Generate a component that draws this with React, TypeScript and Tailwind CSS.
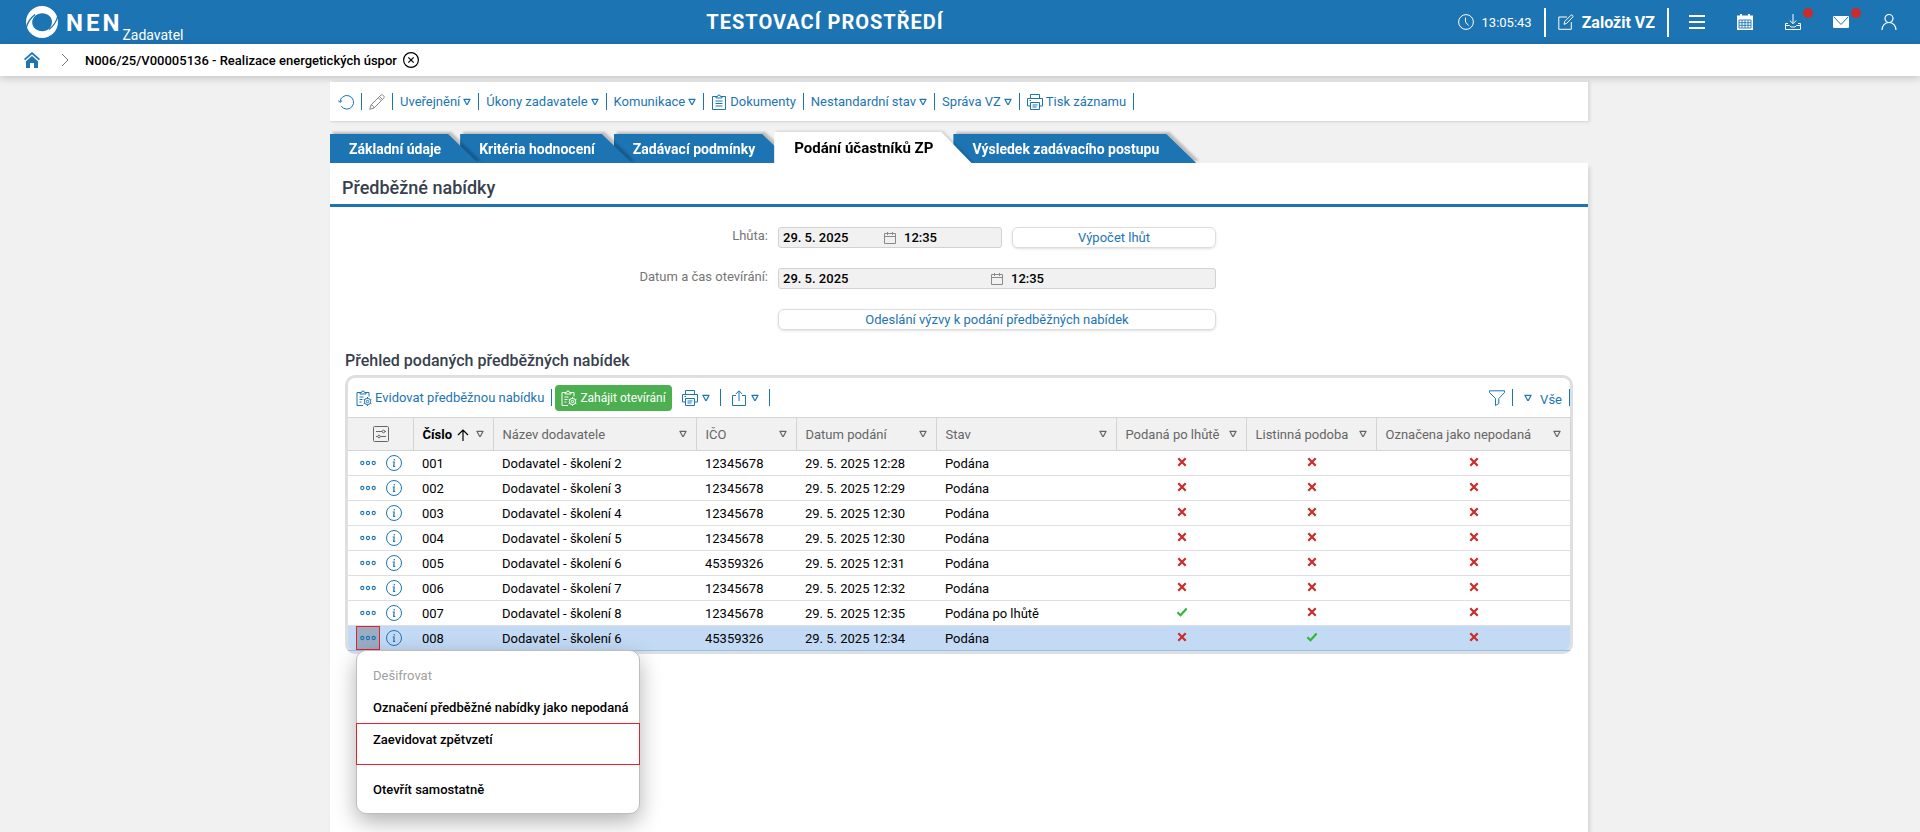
import React, { useState } from "react";
import clsx from "clsx";

type IconProps = { className?: string };

const Logo = () => (
  <svg viewBox="0 0 32 32" className="h-8 w-8" fill="none">
    <path
      d="M16 0a16 16 0 1 0 0 32a16 16 0 1 0 0-32ZM16.300 7.200c5.500 0 9.700 3.800 9.700 8.800s-4.200 9.300-9.700 9.300S6.200 21.500 6.200 16.300s4.600-9.100 10.100-9.100Z"
      fill="#fff"
      fillRule="evenodd"
    />
    <path d="M0 23C1 17.500 4 12.500 9 8.500M32 9C31 14.500 28 19.500 23 23.500" stroke="#1d74b3" strokeWidth="1.300" />
  </svg>
);

const Triangle = ({ className }: IconProps) => (
  <svg viewBox="0 0 8 8" className={clsx("h-2 w-2 shrink-0", className)} fill="none" stroke="currentColor" strokeWidth="1.200">
    <path d="M0.900 1.300h6.200L4.300 6.500H3.700Z" strokeLinejoin="round" />
  </svg>
);

const Line = ({ className, children }: IconProps & { children: React.ReactNode }) => (
  <svg
    viewBox="0 0 16 16"
    className={clsx("h-4 w-4 shrink-0", className)}
    fill="none"
    stroke="currentColor"
    strokeWidth="1"
  >
    {children}
  </svg>
);

const HomeIcon = () => (
  <svg viewBox="0 0 16 16" className="h-4 w-4" fill="#1d74b3">
    <path d="M0.600 7.600 8 1.100l7.400 6.500" fill="none" stroke="#1d74b3" strokeWidth="1.800" />
    <path d="M8 4 2 9.300V16h4v-5h4v5h4V9.300Z" />
  </svg>
);

const RefreshIcon = () => (
  <Line>
    <path d="M2 8a6.800 6.800 0 1 1 1.300 4.300M0 6.300 2 8.500 4.200 6.500" />
  </Line>
);

const PencilIcon = () => (
  <Line className="text-[#888]">
    <path d="M0.700 15.300 2 11 11.800 1.200c1.500-1.500 4.500 1.500 3 3L5 14ZM10.500 2.500l3 3M9.300 3.700l3 3M2 11c1.500 0 3 1.500 3 3" />
  </Line>
);

const ClipboardIcon = () => (
  <Line>
    <path d="M5 2.500H1.500v13h13v-13H11M5 4V2.500h1.500a1.500 1.500 0 0 1 3 0H11V4ZM4.500 7h7M4.500 9.500h7M4.500 12h7" />
  </Line>
);

const ClipboardGearIcon = () => (
  <Line>
    <path d="M4 2.500H1v13h6M4 4V2.500h1.500a1.500 1.500 0 0 1 3 0H10V4ZM10 2.500h3v4M3.500 7h4M3.500 9.500h3M3.500 12h2" />
    <circle cx="11.500" cy="11.500" r="3.200" />
    <circle cx="11.500" cy="11.500" r="1.200" />
    <path d="M11.500 7v1.500M11.500 14.500V16M7.600 9.300l1.300.7M14.100 13l1.300.7M7.600 13.700l1.300-.7M14.100 10l1.300-.7" />
  </Line>
);

const PrinterIcon = () => (
  <Line>
    <path d="M3.500 4.500v-4h9v4M3.500 12h-3V4.500h15V12h-3M3.500 8.500h9v7h-9ZM5.500 11h5M5.500 13h4M2.500 6.500h1.500" />
  </Line>
);

const ShareIcon = () => (
  <Line>
    <path d="M5 5.500H1.500v10h13v-10H11M8 11V1M4.800 4 8 0.800 11.200 4" />
  </Line>
);

const FunnelIcon = () => (
  <Line>
    <path d="M0.500 0.800h15v1.700L9.800 8.500v5l-3.300 2v-7L0.500 2.500Z" />
  </Line>
);

const CalendarIcon = () => (
  <svg viewBox="0 0 12 12" className="h-3 w-3" fill="none" stroke="#8a8a8a" strokeWidth="1">
    <path d="M0.500 1.500h11v10h-11ZM0.500 4.500h11M3.500 0v3M8.500 0v3" />
  </svg>
);

const SettingsIcon = () => (
  <Line className="text-[#666]">
    <rect x="0.500" y="0.500" width="15" height="15" rx="1" />
    <path d="M3 5.500h6M11.800 5.500H13M3 10.500h1.500M7.500 10.500H13" />
    <circle cx="10.500" cy="5.500" r="1.300" />
    <circle cx="6" cy="10.500" r="1.300" />
  </Line>
);

const DotsIcon = () => (
  <svg viewBox="0 0 16 6" className="h-1.5 w-4" fill="none" stroke="#1d74b3" strokeWidth="1.100">
    <circle cx="2.300" cy="3" r="1.600" />
    <circle cx="8" cy="3" r="1.600" />
    <circle cx="13.700" cy="3" r="1.600" />
  </svg>
);

const InfoIcon = () => (
  <Line>
    <circle cx="8" cy="8" r="7.500" />
    <path d="M6.700 7h1.500l-.5 4.300h1.500" strokeWidth="1.200" />
    <circle cx="8.300" cy="4.800" r=".8" fill="currentColor" stroke="none" />
  </Line>
);

const CrossMark = () => (
  <svg viewBox="0 0 10 10" className="mx-auto h-2.5 w-2.5" fill="none" stroke="#ca2b2b" strokeWidth="2.200">
    <path d="M1.300 1.300 8.700 8.700M8.700 1.300 1.300 8.700" />
  </svg>
);

const CheckMark = () => (
  <svg viewBox="0 0 10 10" className="mx-auto h-2.5 w-2.5" fill="none" stroke="#35b535" strokeWidth="2.200">
    <path d="M0.300 5.300 3.500 8.300 9.700 1.500" />
  </svg>
);

const Sep = () => <span className="h-[17px] w-px shrink-0 bg-[#1d74b3]" />;

const actions = [
  { label: "Uveřejnění", menu: true },
  { label: "Úkony zadavatele", menu: true },
  { label: "Komunikace", menu: true },
  { label: "Dokumenty", icon: <ClipboardIcon /> },
  { label: "Nestandardní stav", menu: true },
  { label: "Správa VZ", menu: true },
  { label: "Tisk záznamu", icon: <PrinterIcon /> },
];

const tabs = [
  { label: "Základní údaje", z: "z-30" },
  { label: "Kritéria hodnocení", z: "z-20" },
  { label: "Zadávací podmínky", z: "z-10" },
  { label: "Podání účastníků ZP", z: "z-40", active: true },
  { label: "Výsledek zadávacího postupu", z: "z-0" },
];

const columns = [
  { label: "Číslo", width: "w-[80px]", sorted: true },
  { label: "Název dodavatele", width: "w-[203px]" },
  { label: "IČO", width: "w-[100px]" },
  { label: "Datum podání", width: "w-[140px]" },
  { label: "Stav", width: "w-[180px]" },
  { label: "Podaná po lhůtě", width: "w-[130px]" },
  { label: "Listinná podoba", width: "w-[130px]" },
  { label: "Označena jako nepodaná", width: "w-[194px]" },
];

const rows = [
  { id: "001", name: "Dodavatel - školení 2", ico: "12345678", date: "29. 5. 2025 12:28", state: "Podána", late: false, paper: false },
  { id: "002", name: "Dodavatel - školení 3", ico: "12345678", date: "29. 5. 2025 12:29", state: "Podána", late: false, paper: false },
  { id: "003", name: "Dodavatel - školení 4", ico: "12345678", date: "29. 5. 2025 12:30", state: "Podána", late: false, paper: false },
  { id: "004", name: "Dodavatel - školení 5", ico: "12345678", date: "29. 5. 2025 12:30", state: "Podána", late: false, paper: false },
  { id: "005", name: "Dodavatel - školení 6", ico: "45359326", date: "29. 5. 2025 12:31", state: "Podána", late: false, paper: false },
  { id: "006", name: "Dodavatel - školení 7", ico: "12345678", date: "29. 5. 2025 12:32", state: "Podána", late: false, paper: false },
  { id: "007", name: "Dodavatel - školení 8", ico: "12345678", date: "29. 5. 2025 12:35", state: "Podána po lhůtě", late: true, paper: false },
  { id: "008", name: "Dodavatel - školení 6", ico: "45359326", date: "29. 5. 2025 12:34", state: "Podána", late: false, paper: true },
];

const DateTimeField = ({ id, className }: { id: string; className?: string }) => {
  const [date, setDate] = useState("29. 5. 2025");
  const [time, setTime] = useState("12:35");

  return (
    <div
      className={clsx(
        "grid h-[21px] grid-cols-[1fr_12px_1fr] items-center rounded-[3px] border border-[#d2d2d2] bg-[#f1f1f1] font-medium",
        className
      )}
    >
      <input id={id} value={date} onChange={(e) => setDate(e.target.value)} className="w-full min-w-0 pl-1 outline-none" />
      <button type="button" aria-labelledby={`${id}-label`}>
        <CalendarIcon />
      </button>
      <input
        aria-labelledby={`${id}-label`}
        value={time}
        onChange={(e) => setTime(e.target.value)}
        className="w-full min-w-0 pl-2 outline-none"
      />
    </div>
  );
};

const Header = () => (
  <header className="grid h-11 grid-cols-[1fr_auto_1fr] items-center bg-[#1d74b3] text-white">
    <div className="flex h-full items-center pl-[26px]">
      <Logo />
      <span className="ml-2 pt-0.5 text-2xl font-bold tracking-[3px]">NEN</span>
      <span className="self-end text-sm leading-[18px]">Zadavatel</span>
    </div>
    <h1 className="pr-[270px] text-xl font-bold tracking-wider">TESTOVACÍ PROSTŘEDÍ</h1>
    <div className="flex items-center justify-end pr-[23px]">
      <Line>
        <circle cx="8" cy="8" r="7.400" />
        <path d="M7.500 3.500V8l3 3.500" />
      </Line>
      <span className="ml-2 pt-px text-[13px]">13:05:43</span>
      <span className="mx-3 h-[29px] w-0.5 bg-white" />
      <button className="flex items-center gap-2 text-base font-bold whitespace-nowrap">
        <Line>
          <path d="M9 3H0.800v12.300h12.500V8M6 10.300l.7-2.800L13 1.200c1-1 2.800.8 1.800 1.800L8.600 9.400Z" />
        </Line>
        <span className="pt-px">Založit VZ</span>
      </button>
      <span className="ml-3 h-[29px] w-0.5 bg-white" />
      <div className="ml-5 flex gap-8">
        <button>
          <Line>
            <path d="M0 2h16M0 8h16M0 14h16" strokeWidth="2" />
          </Line>
        </button>
        <button>
          <svg viewBox="0 0 16 16" className="h-4 w-4">
            <path d="M0 1.500h16V16H0ZM3 0h2v3H3ZM11 0h2v3h-2Z" fill="#fff" />
            <path
              d="M2 6h12v8H2ZM5 6v8M8 6v8M11 6v8M2 8.700h12M2 11.300h12"
              fill="none"
              stroke="#1d74b3"
              strokeWidth=".9"
            />
          </svg>
        </button>
        <button className="relative">
          <Line>
            <path d="M8 0v9.500M4.800 6.500 8 9.700l3.200-3.200M3 9.500H0.500v6h15v-6H13M0.500 11.500h4l1.500 1.500h4l1.500-1.500h4" />
          </Line>
          <span className="absolute -top-1.5 left-[18px] h-2.5 w-2.5 rounded-full bg-[#ca2b2b]" />
        </button>
        <button className="relative">
          <svg viewBox="0 0 16 16" className="h-4 w-4">
            <rect y="2" width="16" height="12" rx="1.300" fill="#fff" />
            <path d="M1 3l7 7.500L15 3" fill="none" stroke="#1d74b3" />
          </svg>
          <span className="absolute -top-1.5 left-[18px] h-2.5 w-2.5 rounded-full bg-[#ca2b2b]" />
        </button>
        <button>
          <Line>
            <circle cx="8" cy="4.500" r="4" strokeWidth="1.200" />
            <path d="M1 16c0-4.500 3-7.500 7-7.500s7 3 7 7.500" strokeWidth="1.200" />
          </Line>
        </button>
      </div>
    </div>
  </header>
);

const ContextMenu = () => (
  <ul className="absolute top-full left-2 z-10 -mt-px w-[284px] rounded-[10px] border border-[#bdbdbd] bg-white pt-[9px] pb-[7px] font-medium whitespace-nowrap shadow-[0_8px_22px_rgba(0,0,0,0.3)]">
    <li>
      <button disabled className="h-8 w-full px-4 text-left font-normal text-[#a0a0a0]">
        Dešifrovat
      </button>
    </li>
    <li>
      <button className="h-8 w-full px-4 text-left">Označení předběžné nabídky jako nepodaná</button>
    </li>
    <li className="-mx-px -mt-px border border-[#e8202a]">
      <button className="block w-full px-4 pt-[6px] pb-[14px] text-left">Zaevidovat zpětvzetí</button>
    </li>
    <li className="pt-[9px]">
      <button className="h-8 w-full px-4 text-left">Otevřít samostatně</button>
    </li>
  </ul>
);

const OffersTable = () => (
  <table className="w-full table-fixed border-collapse">
    <thead>
      <tr className="h-[33px] border-y border-[#d4d4d4] bg-[#f1f1f1] text-left text-[#666]">
        <th className="w-[65px] border-r border-[#d4d4d4] pl-px">
          <button className="mx-auto block">
            <SettingsIcon />
          </button>
        </th>
        {columns.map((col) => (
          <th key={col.label} className={clsx("border-r border-[#d4d4d4] px-[9px] font-normal", col.width)}>
            <div className="flex items-center justify-between whitespace-nowrap">
              <span className={clsx("flex items-center gap-[5px] pt-px", col.sorted && "font-bold text-black")}>
                {col.label}
                {col.sorted && (
                  <svg viewBox="0 0 12 12" className="h-3 w-3" fill="none" stroke="currentColor" strokeWidth="1.200">
                    <path d="M6 12V1M1 6l5-5 5 5" />
                  </svg>
                )}
              </span>
              <button>
                <Triangle />
              </button>
            </div>
          </th>
        ))}
      </tr>
    </thead>
    <tbody>
      {rows.map((row) => {
        const selected = row.id === "008";
        return (
          <tr
            key={row.id}
            className={clsx(
              "h-[25px]",
              selected
                ? "bg-[#c3daf5] shadow-[inset_0_-1px_0_#93c0ee] [&>td:first-child]:rounded-bl-[7px] [&>td:last-child]:rounded-br-[7px]"
                : "border-b border-[#dedfe0]"
            )}
          >
            <td>
              <div className="flex h-6 items-center gap-[6px] pl-2 text-[#1d74b3]">
                <button
                  className={clsx(
                    "flex h-full w-6 items-center justify-center",
                    selected && "border border-[#e8202a] bg-[#9aadc5]"
                  )}
                >
                  <DotsIcon />
                </button>
                <button>
                  <InfoIcon />
                </button>
              </div>
            </td>
            <td className="px-[9px] pt-px">{row.id}</td>
            <td className="px-[9px] pt-px">{row.name}</td>
            <td className="px-[9px] pt-px">{row.ico}</td>
            <td className="px-[9px] pt-px">{row.date}</td>
            <td className="px-[9px] pt-px">{row.state}</td>
            <td className="pb-0.5 pl-0.5">{row.late ? <CheckMark /> : <CrossMark />}</td>
            <td className="pb-0.5 pl-0.5">{row.paper ? <CheckMark /> : <CrossMark />}</td>
            <td className="pb-0.5 pl-0.5">
              <CrossMark />
            </td>
          </tr>
        );
      })}
    </tbody>
  </table>
);

const App = () => {
  return (
    <div className="flex min-h-screen flex-col bg-[#f1f1f1] font-[Roboto,sans-serif] text-[13px] leading-5 text-black">
      <Header />

      <nav className="flex h-8 items-center bg-white pl-6 shadow-[0_2px_8px_rgba(0,0,0,0.2)]">
        <a href="#">
          <HomeIcon />
        </a>
        <svg viewBox="0 0 8 14" className="ml-[21px] h-3.5 w-2" fill="none" stroke="#777">
          <path d="M1 1l6 6-6 6" />
        </svg>
        <a href="#" className="ml-4 pt-px font-medium">
          N006/25/V00005136 - Realizace energetických úspor
        </a>
        <button className="ml-1.5">
          <Line>
            <circle cx="8" cy="8" r="7.400" strokeWidth="1.200" />
            <path d="M5.300 5.300l5.400 5.400M10.700 5.300l-5.400 5.400" strokeWidth="1.200" />
          </Line>
        </button>
      </nav>

      <main className="mx-auto mt-1.5 flex w-full max-w-[1260px] flex-1 flex-col pr-0.5">
        <div className="flex h-10 items-center gap-[7px] border-b border-[#dcdcdc] bg-white pl-2 text-[#1d74b3] shadow-[2px_0_3px_rgba(0,0,0,0.1)]">
          <button>
            <RefreshIcon />
          </button>
          <Sep />
          <button>
            <PencilIcon />
          </button>
          <Sep />
          {actions.map((action) => (
            <React.Fragment key={action.label}>
              <button className="flex items-center gap-[3px]">
                {action.icon}
                {action.label}
                {action.menu && <Triangle />}
              </button>
              <Sep />
            </React.Fragment>
          ))}
        </div>

        <ul className="mt-[10px] flex items-end">
          {tabs.map((tab) => (
            <li
              key={tab.label}
              className={clsx(
                "relative -mr-[18px]",
                tab.z,
                tab.active
                  ? "drop-shadow-[2px_-1px_1px_rgba(0,0,0,0.12)]"
                  : "drop-shadow-[3px_-2px_1px_rgba(0,0,0,0.22)]"
              )}
            >
              <button
                className={clsx(
                  "block font-bold whitespace-nowrap [clip-path:polygon(0_0,calc(100%-30px)_0,100%_100%,0_100%)]",
                  tab.active
                    ? "h-[31px] bg-white pr-[38px] pl-5 text-[15px] text-black"
                    : "h-[29px] bg-[#1d74b3] pr-[37px] pl-[19px] text-sm text-white"
                )}
              >
                {tab.label}
              </button>
            </li>
          ))}
        </ul>

        <section className="relative z-50 flex-1 bg-white pb-10 shadow-[2px_4px_4px_rgba(0,0,0,0.12)]">
          <h2 className="border-b-[3px] border-[#1d74b3] pt-[15px] pb-[6px] pl-3 text-lg leading-5 font-medium text-[#37414d]">
            Předběžné nabídky
          </h2>

          <form className="mt-5 grid grid-cols-[438px_438px] gap-x-2.5 gap-y-5" onSubmit={(e) => e.preventDefault()}>
            <label id="deadline-label" htmlFor="deadline" className="h-[21px] text-right leading-[17px] text-[#757575]">
              Lhůta:
            </label>
            <div className="flex gap-2.5">
              <DateTimeField id="deadline" className="w-[224px]" />
              <button className="h-[21px] flex-1 rounded-md border border-[#dcdcdc] text-[#1d74b3] shadow-sm">
                Výpočet lhůt
              </button>
            </div>
            <label id="opening-label" htmlFor="opening" className="h-[21px] text-right leading-[17px] text-[#757575]">
              Datum a čas otevírání:
            </label>
            <DateTimeField id="opening" />
            <button className="col-start-2 h-[21px] rounded-md border border-[#dcdcdc] text-[#1d74b3] shadow-sm">
              Odeslání výzvy k podání předběžných nabídek
            </button>
          </form>

          <div className="px-[15px]">
            <h3 className="mt-[21px] mb-1 text-base leading-5 font-medium text-[#37414d]">
              Přehled podaných předběžných nabídek
            </h3>
            <div className="relative rounded-[10px] border-[3px] border-[#dedfe0]">
              <div className="flex h-[39px] items-center gap-[7px] pl-2 text-[#1d74b3]">
                <button className="flex items-center gap-[3px]">
                  <ClipboardGearIcon />
                  <span className="pt-px">Evidovat předběžnou nabídku</span>
                </button>
                <Sep />
                <button className="-ml-1 flex h-[26px] items-center gap-[3px] rounded-[4px] bg-[#4caf50] px-[6px] text-xs text-white">
                  <ClipboardGearIcon />
                  <span className="pt-px">Zahájit otevírání</span>
                </button>
                <button className="mx-[3px] flex items-center gap-1">
                  <PrinterIcon />
                  <Triangle />
                </button>
                <Sep />
                <button className="mx-[3px] flex items-center gap-1">
                  <ShareIcon />
                  <Triangle />
                </button>
                <Sep />
                <div className="ml-auto flex items-center gap-[7px]">
                  <button>
                    <FunnelIcon />
                  </button>
                  <Sep />
                  <button className="ml-1 flex items-center gap-2">
                    <Triangle />
                    <span className="pt-1">Vše</span>
                  </button>
                  <Sep />
                </div>
              </div>
              <OffersTable />
              <ContextMenu />
            </div>
          </div>
        </section>
      </main>
    </div>
  );
};

export default App;
